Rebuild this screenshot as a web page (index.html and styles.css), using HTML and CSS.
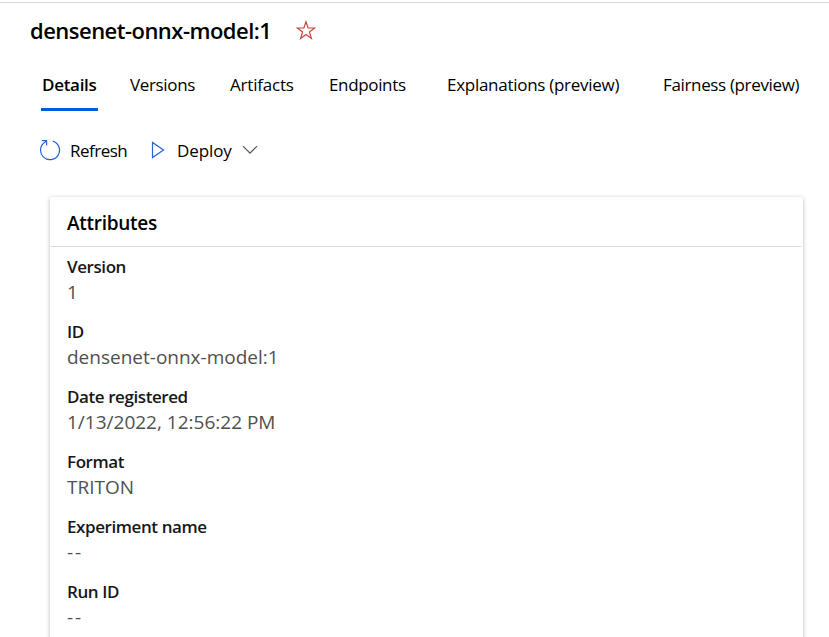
FILE: index.html
```html
<!DOCTYPE html>
<html lang="en">
<head>
<meta charset="utf-8">
<title>densenet-onnx-model:1</title>
<link rel="stylesheet" href="styles.css">
</head>
<body>
<header class="header">
  <h1 class="title">densenet-onnx-model:1</h1>
  <svg class="star" width="20" height="20" viewBox="0 0 20 20"><path d="M10 1.7 12.1 8H18.7L13.4 12 15.4 18.4 10 14.5 4.6 18.4 6.6 12 1.3 8H7.9Z"/></svg>
</header>
<nav class="tabs">
  <a class="tab active">Details</a>
  <a class="tab versions">Versions</a>
  <a class="tab artifacts">Artifacts</a>
  <a class="tab endpoints">Endpoints</a>
  <a class="tab explanations">Explanations (preview)</a>
  <a class="tab fairness">Fairness (preview)</a>
</nav>
<div class="toolbar">
  <button class="command refresh"><svg width="22" height="22" viewBox="0 0 22 22"><path d="M13.8 2.1A9.5 9.5 0 1 1 6.2 3M2.8 1.6H7.6V6.4M7.6 1.6 5.4 3.6"/></svg><span>Refresh</span></button>
  <button class="command deploy"><svg width="14" height="18" viewBox="0 0 14 18"><path d="M1.5 1.5V16.5L12.5 9Z"/></svg><span>Deploy</span><svg class="chevron" width="16" height="10" viewBox="0 0 16 10"><path d="M1 1.2 8 8.2 15 1.2"/></svg></button>
</div>
<main class="card">
  <h2 class="card-title">Attributes</h2>
  <dl class="fields">
    <div class="field"><dt>Version</dt><dd>1</dd></div>
    <div class="field"><dt>ID</dt><dd>densenet-onnx-model:1</dd></div>
    <div class="field"><dt>Date registered</dt><dd>1/13/2022, 12:56:22 PM</dd></div>
    <div class="field"><dt>Format</dt><dd>TRITON</dd></div>
    <div class="field"><dt>Experiment name</dt><dd class="empty">--</dd></div>
    <div class="field"><dt>Run ID</dt><dd class="empty">--</dd></div>
  </dl>
</main>
</body>
</html>
```
FILE: styles.css
```css
* { box-sizing: border-box; }
html { height: 100%; overflow: hidden; }
body {
  margin: 0;
  height: 637px;
  overflow: hidden;
  padding-top: 2px;
  background: linear-gradient(#d9d9d9, #d9d9d9) 0 2px / 100% 1px no-repeat #fff;
  color: #000;
  font: 400 17px/24px "Open Sans", "Noto Sans", sans-serif;
}
svg { display: block; flex: none; fill: none; stroke: #2563d9; stroke-width: 1.2; }
.header { display: flex; align-items: center; height: 56px; padding-left: 30px; }
.title { margin: 0; width: 266px; font-size: 22px; font-weight: 600; line-height: 30px; letter-spacing: -0.52px; white-space: nowrap; }
.star { stroke: #c4473a; }
.tabs { display: flex; height: 53px; padding: 15px 0 0 41px; gap: 32px; }
.tab { height: 38px; line-height: 23px; white-space: nowrap; letter-spacing: -0.35px; }
.active { width: 57px; padding-left: 1px; font-weight: 600; letter-spacing: -0.3px; border-bottom: 3px solid #015cda; }
.versions { width: 68px; }
.artifacts { width: 67px; letter-spacing: -0.2px; }
.endpoints { width: 86px; }
.explanations { width: 184px; letter-spacing: -0.28px; }
.toolbar { display: flex; align-items: center; height: 78px; padding-left: 39px; gap: 23px; }
.command { display: flex; align-items: center; padding: 0; border: 0; background: none; color: inherit; font: inherit; }
.command span { padding-top: 1px; }
.refresh { width: 89px; gap: 9px; letter-spacing: -0.5px; }
.deploy { gap: 12px; letter-spacing: -0.1px; }
.chevron { stroke: #555; margin-left: -2px; }
.card { width: 753px; height: 460px; margin: 8px 0 0 50px; padding: 0 2px 0 1px; box-shadow: 0 1px 4px rgba(0, 0, 0, .28); border-radius: 2px; background: #fff; }
.card-title { margin: 0; height: 50px; padding: 12px 16px; border-bottom: 1px solid #d9d9d9; font-size: 19px; font-weight: 600; line-height: 28px; letter-spacing: -0.28px; }
.fields { margin: 0; padding: 7px 16px; }
.field { height: 65px; }
dt { font-weight: 600; letter-spacing: -0.42px; line-height: 26px; color: #171717; }
dd { margin: -1px 0 0; font-size: 19px; line-height: 26px; color: #505050; }
.empty { letter-spacing: 2px; }
```
